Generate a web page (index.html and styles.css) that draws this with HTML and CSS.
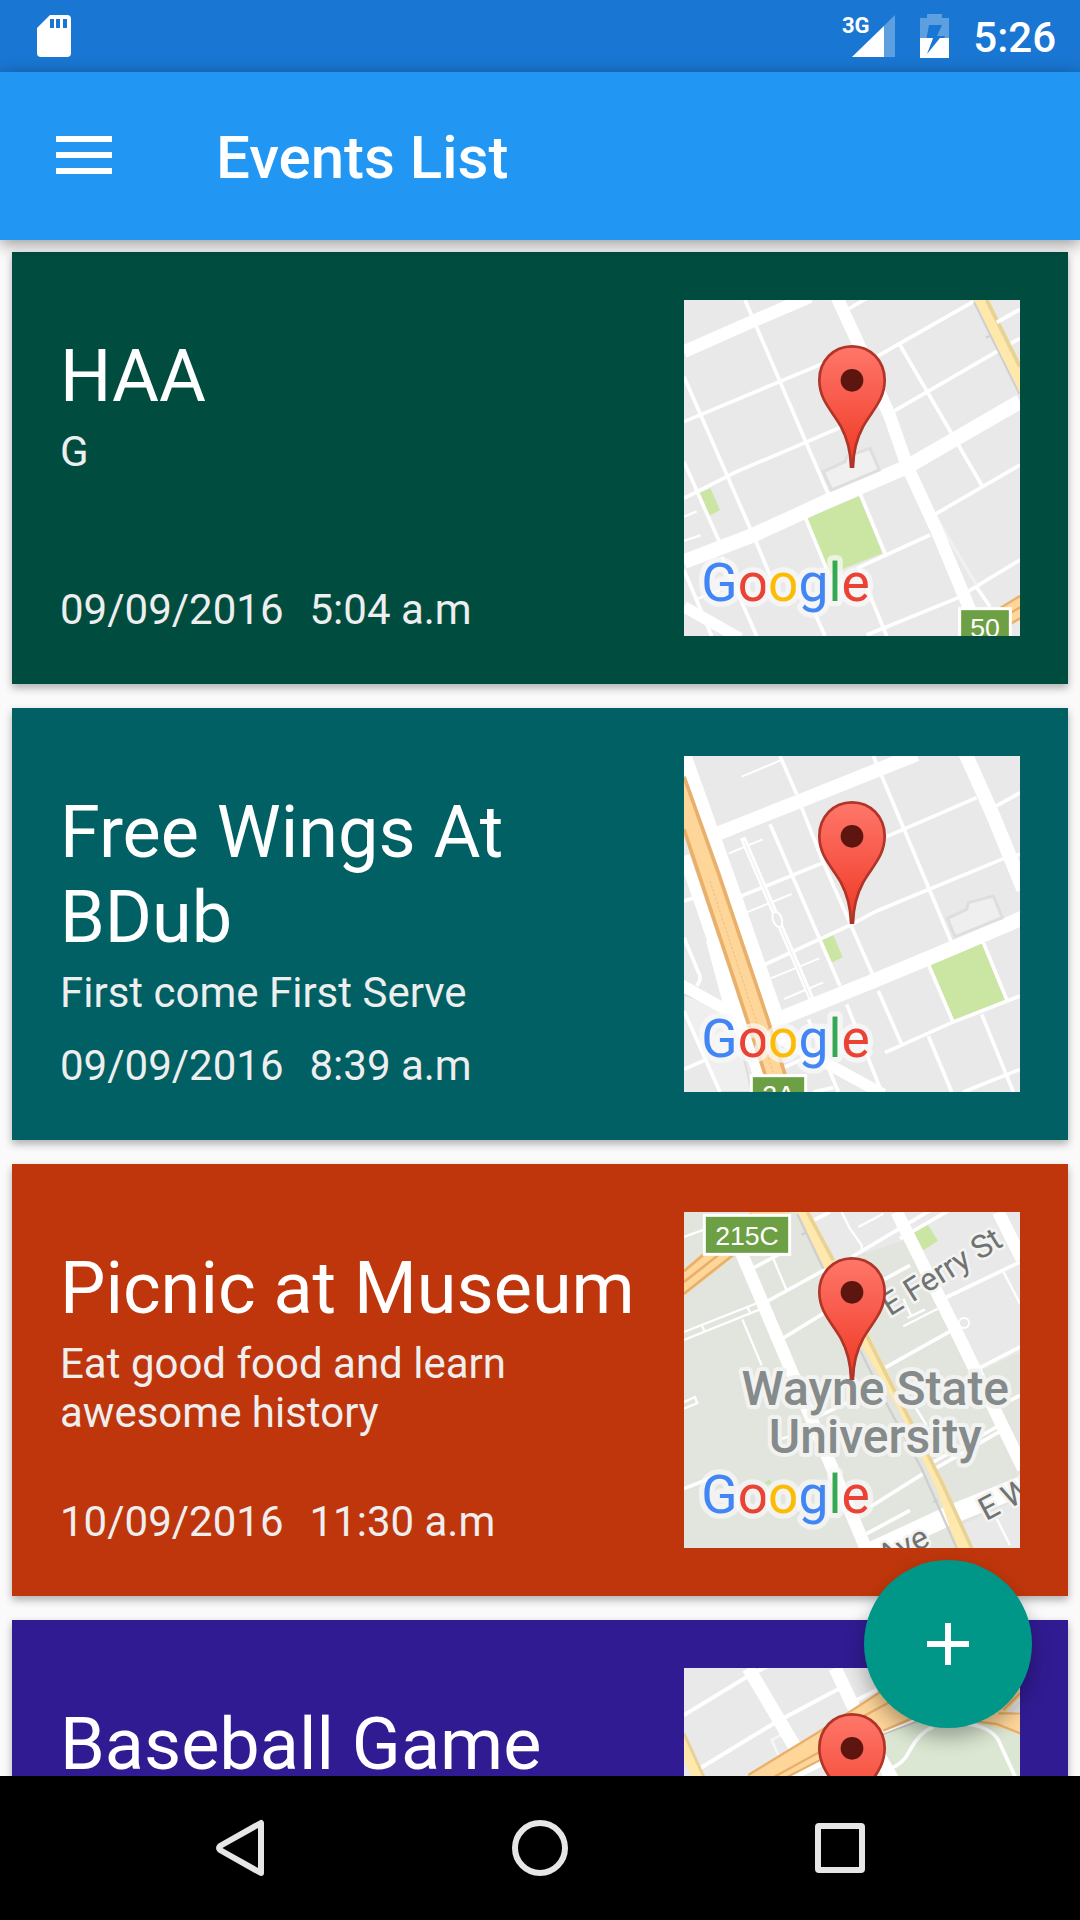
FILE: index.html
```html
<!DOCTYPE html>
<html lang="en">
<head>
<meta charset="utf-8">
<meta name="viewport" content="width=device-width, initial-scale=1">
<title>Events List</title>
<link rel="stylesheet" href="styles.css">
</head>
<body>
<svg class="defs" aria-hidden="true">
  <defs>
    <linearGradient id="pinFill" x1="0" y1="0" x2="0" y2="1">
      <stop offset="0" stop-color="#ff776a"/>
      <stop offset="0.75" stop-color="#f34735"/>
      <stop offset="1" stop-color="#f03c28"/>
    </linearGradient>
    <symbol id="pin" viewBox="42 30 1008 1008">
      <path d="M546 169C490 169 448 213 448 270C448 330 486 362 512 408C532 445 542 490 543 530H549C550 490 560 445 580 408C606 362 644 330 644 270C644 213 602 169 546 169Z" fill="url(#pinFill)" stroke="#b03528" stroke-width="8"/>
      <circle cx="546" cy="271" r="34" fill="#5c150f"/>
    </symbol>
  </defs>
</svg>

<header class="status">
  <svg class="status-sd" viewBox="0 0 34 42" role="img" aria-label="SD card">
    <path d="M13 0H30Q34 0 34 4V38Q34 42 30 42H4Q0 42 0 38V13Z" fill="#fff"/>
    <path d="M13 4h4v9h-4zM19 4h4v9h-4zM26 4h4v9h-4z" fill="#1976d2"/>
  </svg>
  <div class="status-right">
    <svg class="status-signal" viewBox="0 0 54 44" role="img" aria-label="3G signal">
      <path d="M53 1V43H10Z" fill="#fff" opacity=".3"/>
      <path d="M42 12V43H10Z" fill="#fff"/>
      <text x="0" y="19" class="network">3G</text>
    </svg>
    <svg class="status-battery" viewBox="0 0 29 44" role="img" aria-label="Battery charging">
      <path d="M0 4H7V0H22V4H29V24H24L25 22H17L22 11H9L6 27H12L11 24H0Z" fill="#fff" opacity=".3"/>
      <path d="M0 24H13L12 27L7 40L20 24H29V44H0Z" fill="#fff"/>
    </svg>
    <time class="clock">5:26</time>
  </div>
</header>

<div class="appbar">
  <button class="menu" type="button" aria-label="Open menu">
    <svg viewBox="0 0 72 72"><path d="M8 16h56v6H8zM8 32h56v6H8zM8 48h56v6H8z" fill="#fff"/></svg>
  </button>
  <h1 class="appbar-title">Events List</h1>
</div>

<main class="content">
  <div class="list">
    <article class="card card-green">
      <div class="card-body">
        <h2>HAA</h2>
        <p class="desc">G</p>
        <p class="when"><span>09/09/2016</span><span>5:04 a.m</span></p>
      </div>
      <svg class="map" viewBox="42 30 1008 1008" role="img" aria-label="Map">
        <rect x="42" y="30" width="1008" height="1008" fill="#e9e9e9"/>
        <path d="M87 610L122 595L150 661L116 678Z M410 685L568 619L637 790L480 853Z" fill="#cbe6a3"/>
        <g fill="none" stroke="#fff" stroke-width="11">
          <path d="M225 30L480 625M42 260L260 760L310 880M42 515L150 760M42 395L460 220M620 200L910 35M42 625L200 545L400 460L520 408M530 60L590 25M690 165L935 585M660 370L980 185L1050 145M795 673L1050 525M405 680L475 850M570 610L645 790M560 835L780 735M565 830L650 1038M42 840L125 1038M155 800L260 1038M430 960L465 1038M590 1035L860 925L1050 810M915 885L960 950M975 100L1050 58"/>
          <path d="M42 680L80 664M42 752L92 736M85 925L150 900" stroke-width="7"/>
        </g>
        <path d="M800 685L920 885" stroke="#f1f1f1" stroke-width="10"/>
        <g fill="none" stroke="#fff">
          <path d="M42 185L250 93L420 20M500 20L560 150L660 380L712 530L800 720L900 960" stroke-width="38"/>
          <path d="M42 815L250 735L480 630L712 530L1050 335" stroke-width="44"/>
          <path d="M42 950L210 1045" stroke-width="34"/>
        </g>
        <path d="M460 545L525 515L530 500L600 475L628 540L485 600Z" fill="#f0f0f0" stroke="#dededc" stroke-width="9"/>
        <path d="M910 30H958L1050 220V310Z" fill="#ffe8ac"/>
        <path d="M950 30L1050 230" stroke="#e8d296" stroke-width="12"/>
        <path d="M912 36L1048 312M948 143L962 136" stroke="#cfcfcf" stroke-width="6"/>
        <path d="M980 97L1050 58" stroke="#fff" stroke-width="11"/>
        <path d="M990 950L1050 915V990L1010 1015Z" fill="#ffd699"/>
        <path d="M990 955L1050 918M1020 970L1050 952M1020 1002L1050 985" stroke="#e8b06b" stroke-width="7"/>
        <rect x="869" y="956" width="152" height="100" fill="#6d9f44" stroke="#fff" stroke-width="9"/>
        <text class="shield" x="945" y="1042">50</text>
        <text class="google" x="94" y="934"><tspan fill="#4285f4">G</tspan><tspan fill="#ea4335">o</tspan><tspan fill="#fbbc05">o</tspan><tspan fill="#4285f4">g</tspan><tspan fill="#34a853">l</tspan><tspan fill="#ea4335">e</tspan></text>
        <use href="#pin" x="42" y="30" width="1008" height="1008"/>
      </svg>
    </article>

    <article class="card card-teal">
      <div class="card-body">
        <h2>Free Wings At BDub</h2>
        <p class="desc">First come First Serve</p>
        <p class="when"><span>09/09/2016</span><span>8:39 a.m</span></p>
      </div>
      <svg class="map" viewBox="42 30 1008 1008" role="img" aria-label="Map">
        <rect x="42" y="30" width="1008" height="1008" fill="#e9e9e9"/>
        <path d="M42 745L190 800L245 1038H150L42 790Z" fill="#efefef" stroke="#dedede" stroke-width="6"/>
        <path d="M455 583L490 567L518 634L484 650Z M779 657L935 591L1005 763L848 825Z" fill="#cbe6a3"/>
        <g fill="none" stroke="#fff" stroke-width="11">
          <path d="M330 30L380 145M395 185L460 350L610 690M610 30L845 590M300 235L510 720M650 272L920 155M970 185L1050 140M195 458L460 350M275 660L545 535L620 495L1000 338L1050 325M775 655L848 825M940 590L1010 760M645 920L700 895L845 830L1050 750M625 735L695 895M775 870L845 1038M935 805L1030 1038M530 775L635 1038M415 820L505 1038M880 1038L1050 970M42 465L90 450M42 575L88 685Q95 700 80 720M42 795L150 1038M42 970L110 940M340 965L420 930M430 1038L490 1025"/>
          <path d="M218 275L425 760" stroke-width="18"/>
          <path d="M215 92L330 44M177 322L278 280M228 500L365 444M302 697L448 637M342 759L460 709" stroke-width="6"/>
        </g>
        <path d="M222 285L422 755" stroke="#ededed" stroke-width="3"/>
        <ellipse cx="322" cy="520" rx="13" ry="24" fill="#e9e9e9" stroke="#fff" stroke-width="6" transform="rotate(-20 322 520)"/>
        <g fill="none" stroke="#fff">
          <path d="M125 270L390 165L740 25M885 20L970 210L1060 430" stroke-width="42"/>
          <path d="M300 830L610 705L850 605L1060 515" stroke-width="44"/>
          <path d="M38 20L190 445L320 820" stroke-width="46"/>
          <path d="M42 330L190 760L270 1000M30 715L230 825L420 925L640 1045" stroke-width="34"/>
          <path d="M130 580L190 800L250 920" stroke-width="46"/>
        </g>
        <path d="M42 90L150 400L290 810L350 1000H290L180 670L42 255Z" fill="#ffd699"/>
        <path d="M42 92L145 380L290 810L345 985M42 250L185 680L290 1000" fill="none" stroke="#e8b06b" stroke-width="11"/>
        <path d="M120 405L240 770L310 980" fill="none" stroke="#eebd80" stroke-width="3" stroke-dasharray="8 5"/>
        <path d="M832 517L890 490L895 470L970 450L997 515L855 572Z" fill="#efefef" stroke="#dededc" stroke-width="9"/>
        <rect x="244" y="989" width="163" height="80" fill="#6d9f44" stroke="#fff" stroke-width="9"/>
        <text class="shield" x="326" y="1075">2A</text>
        <text class="google" x="94" y="934"><tspan fill="#4285f4">G</tspan><tspan fill="#ea4335">o</tspan><tspan fill="#fbbc05">o</tspan><tspan fill="#4285f4">g</tspan><tspan fill="#34a853">l</tspan><tspan fill="#ea4335">e</tspan></text>
        <use href="#pin" x="42" y="30" width="1008" height="1008"/>
      </svg>
    </article>

    <article class="card card-orange">
      <div class="card-body">
        <h2>Picnic at Museum</h2>
        <p class="desc">Eat good food and learn awesome history</p>
        <p class="when"><span>10/09/2016</span><span>11:30 a.m</span></p>
      </div>
      <svg class="map" viewBox="42 30 1008 1008" role="img" aria-label="Map">
        <rect x="42" y="30" width="1008" height="1008" fill="#e2e4de"/>
        <path d="M400 30H1050V450L925 510L800 250L720 110L500 180Z M870 970L1050 890V1038H900Z" fill="#e9e9e9"/>
        <path d="M728 88L770 62L804 116L760 145Z M280 845L298 832L310 850Z" fill="#cbe6a3"/>
        <g fill="none" stroke="#fff" stroke-width="11">
          <path d="M250 198L340 150M340 408L500 310L720 190M270 310L470 200M420 60L480 30M545 165L840 -10M690 110L880 0M640 500L840 388M800 300L1050 180M930 497L1050 435M430 650L620 560M600 915L760 815M590 995L720 925M42 860L130 825M960 625L1050 580M790 780L980 675M795 800L990 688"/>
          <path d="M42 390L270 300M42 414L270 322M95 370L105 390M230 312L240 330M310 170L352 270M217 352L275 490M42 600L75 585L82 603L42 620M515 30L540 80L575 130L577 150M565 75L640 35M998 205L1050 305M700 373L803 320M712 348L765 322M700 290L725 345M42 105L110 80M320 715L400 690M720 590L770 670M980 950L1020 1030" stroke-width="7"/>
          <circle cx="882" cy="363" r="15" stroke-width="6"/>
        </g>
        <path d="M215 155L340 450L590 1045M680 30L850 370L1060 800M985 30L1055 170" fill="none" stroke="#fff" stroke-width="38"/>
        <path d="M590 1055L850 935L1060 850" fill="none" stroke="#fff" stroke-width="58"/>
        <path d="M42 200L240 30H360L42 282Z" fill="#ffd699"/>
        <path d="M42 208L245 35M42 240L290 45M42 275L340 40" fill="none" stroke="#e8b06b" stroke-width="8"/>
        <path d="M380 30H420L495 175L600 405L760 720L830 855L905 1038H860L800 860L690 630L580 440L470 210Z" fill="#ffe8ac"/>
        <path d="M412 30L490 175M590 400L655 530L780 770L822 855L905 1038" fill="none" stroke="#e8d296" stroke-width="11"/>
        <path d="M382 36L460 200M570 445L655 615L755 800L860 1038M395 98L408 92M790 900L803 895" fill="none" stroke="#cfcfcf" stroke-width="7"/>
        <rect x="103" y="40" width="256" height="117" fill="#6d9f44" stroke="#fff" stroke-width="9"/>
        <text class="shield" x="231" y="128">215C</text>
        <text class="road" x="660" y="344" transform="rotate(-32 660 344)">E Ferry St</text>
        <text class="road" x="948" y="958" transform="rotate(-28 948 958)">E Warren</text>
        <text class="road" x="644" y="1098" transform="rotate(-27 644 1098)">Ave</text>
        <text class="place" x="616" y="608">Wayne State</text>
        <text class="place" x="616" y="752">University</text>
        <text class="google" x="94" y="934"><tspan fill="#4285f4">G</tspan><tspan fill="#ea4335">o</tspan><tspan fill="#fbbc05">o</tspan><tspan fill="#4285f4">g</tspan><tspan fill="#34a853">l</tspan><tspan fill="#ea4335">e</tspan></text>
        <use href="#pin" x="42" y="30" width="1008" height="1008"/>
      </svg>
    </article>

    <article class="card card-purple">
      <div class="card-body">
        <h2>Baseball Game</h2>
      </div>
      <svg class="map" viewBox="42 384 1008 1008" role="img" aria-label="Map">
        <rect x="42" y="384" width="1008" height="1008" fill="#e9e9e9"/>
        <path d="M640 580L760 540H1050V1392H800L650 680Z" fill="#dbe7d2"/>
        <path d="M42 525L240 405L290 380M90 685L320 545L510 445M560 480L620 450" fill="none" stroke="#fff" stroke-width="12"/>
        <path d="M360 570L305 600L325 645" fill="none" stroke="#f6f6f6" stroke-width="8"/>
        <path d="M235 384L380 630M495 384L555 510M600 600L680 740" fill="none" stroke="#fff" stroke-width="40"/>
        <path d="M330 730L640 575L740 535" fill="none" stroke="#fff" stroke-width="22"/>
        <path d="M640 583L740 545" fill="none" stroke="#c9c4c0" stroke-width="6"/>
        <path d="M230 708L440 580L630 455L760 384H1050V470L1010 515L1050 525V580L930 548L760 525L640 570L440 660L350 712Z" fill="#ffd699"/>
        <path d="M235 705L440 580L630 457M310 712L450 635M350 712L450 660M560 540L670 480M640 572L740 530M920 545L980 552L1050 580M985 520L1050 520M1000 510L1050 460" fill="none" stroke="#e8b06b" stroke-width="7"/>
        <path d="M650 690Q700 675 720 630Q750 575 790 560M890 552Q960 560 985 600L1040 720" fill="none" stroke="#fff" stroke-width="11"/>
        <path d="M42 575L105 712H65L42 660Z" fill="#ffe8ac"/>
        <path d="M42 580L102 712" stroke="#e8d296" stroke-width="9"/>
        <path d="M1010 515L1050 482V518Z" fill="#dedede"/>
        <use href="#pin" x="42" y="384" width="1008" height="1008"/>
      </svg>
    </article>
  </div>
  <button class="fab" type="button" aria-label="Add event">
    <svg viewBox="0 0 72 72"><path d="M33 15h6v18h18v6H39v18h-6V39H15v-6h18z" fill="#fff"/></svg>
  </button>
</main>

<nav class="navbar" aria-label="System">
  <button type="button" aria-label="Back">
    <svg viewBox="0 0 72 72"><path d="M57 11V61L16 38Q14 36 16 34Z"/></svg>
  </button>
  <button type="button" aria-label="Home">
    <svg viewBox="0 0 72 72"><circle cx="36" cy="36" r="25"/></svg>
  </button>
  <button type="button" aria-label="Recent apps">
    <svg viewBox="0 0 72 72"><rect x="14" y="14" width="44" height="44" rx="1"/></svg>
  </button>
</nav>
</body>
</html>
```
FILE: styles.css
```css
* {
  box-sizing: border-box;
}

body {
  margin: 0;
  height: 100vh;
  display: flex;
  flex-direction: column;
  overflow: hidden;
  background: #fafafa;
  font-family: Roboto, "Liberation Sans", sans-serif;
  color: #fff;
}

h1, h2, p {
  margin: 0;
}

button {
  padding: 0;
  border: 0;
  background: none;
  color: inherit;
}

svg {
  display: block;
}

.defs {
  position: absolute;
  width: 0;
  height: 0;
}

/* Status bar */
.status {
  flex: none;
  height: 72px;
  padding: 0 24px 0 37px;
  display: flex;
  align-items: center;
  justify-content: space-between;
  background: #1976d2;
}

.status-sd {
  width: 34px;
  height: 42px;
}

.status-right {
  display: flex;
  align-items: center;
  gap: 24px;
}

.status-signal {
  width: 54px;
  height: 44px;
  overflow: visible;
}

.status-battery {
  width: 29px;
  height: 44px;
}

.network {
  font-size: 22px;
  font-weight: 700;
  fill: #fff;
}

.clock {
  padding-top: 4px;
  font-size: 42px;
  line-height: 48px;
  font-weight: 500;
}

/* App bar */
.appbar {
  flex: none;
  height: 168px;
  padding: 0 48px;
  display: flex;
  align-items: center;
  gap: 96px;
  background: #2196f3;
  box-shadow: 0 4px 16px rgba(0, 0, 0, .4);
  position: relative;
  z-index: 1;
}

.menu svg,
.fab svg,
.navbar svg {
  width: 72px;
  height: 72px;
}

.appbar-title {
  padding-top: 4px;
  font-size: 60px;
  line-height: 72px;
  font-weight: 500;
}

/* Event list */
.content {
  flex: 1;
  min-height: 0;
  position: relative;
}

.list {
  height: 100%;
  padding: 12px;
  display: flex;
  flex-direction: column;
  gap: 24px;
  overflow-y: auto;
  scrollbar-width: none;
}

.card {
  flex: none;
  padding: 48px;
  display: flex;
  gap: 24px;
  box-shadow: 0 4px 8px rgba(0, 0, 0, .3);
}

.card-green { background: #004d40; }
.card-teal { background: #006064; }
.card-orange { background: #bf360c; }
.card-purple { background: #311b92; }

.card-body {
  flex: 1;
  min-width: 0;
  padding: 34px 0 2px;
  display: flex;
  flex-direction: column;
  gap: 8px;
}

.card h2 {
  font-size: 72px;
  line-height: 85px;
  font-weight: 400;
}

.desc,
.when {
  font-size: 42px;
  line-height: 49px;
  color: #eee;
}

.when {
  margin-top: auto;
  display: flex;
  gap: 26px;
}

/* Map thumbnails */
.map {
  flex: none;
  width: 336px;
  height: 336px;
}

.google {
  font-size: 160px;
  font-weight: 400;
  stroke: rgba(250, 250, 250, .7);
  stroke-width: 32px;
  stroke-linejoin: round;
  paint-order: stroke;
}

.shield {
  font-family: "Liberation Sans", sans-serif;
  font-size: 80px;
  text-anchor: middle;
  fill: #fff;
}

.road {
  font-size: 96px;
  fill: #707373;
  stroke: #f3f3f1;
  stroke-width: 16px;
  stroke-linejoin: round;
  paint-order: stroke;
}

.place {
  font-size: 144px;
  font-weight: 500;
  text-anchor: middle;
  fill: #858a8b;
  stroke: #f2f3f0;
  stroke-width: 24px;
  stroke-linejoin: round;
  paint-order: stroke;
}

/* Floating action button */
.fab {
  position: absolute;
  right: 48px;
  bottom: 48px;
  width: 168px;
  height: 168px;
  display: flex;
  align-items: center;
  justify-content: center;
  border-radius: 50%;
  background: #009688;
  box-shadow: 0 10px 20px rgba(0, 0, 0, .3);
}

/* System navigation */
.navbar {
  flex: none;
  height: 144px;
  padding: 0 90px;
  display: grid;
  grid-template-columns: repeat(3, 1fr);
  background: #000;
  position: relative;
}

.navbar button {
  display: flex;
  align-items: center;
  justify-content: center;
}

.navbar svg {
  fill: none;
  stroke: #e6e6e6;
  stroke-width: 6px;
  stroke-linejoin: round;
}
```
